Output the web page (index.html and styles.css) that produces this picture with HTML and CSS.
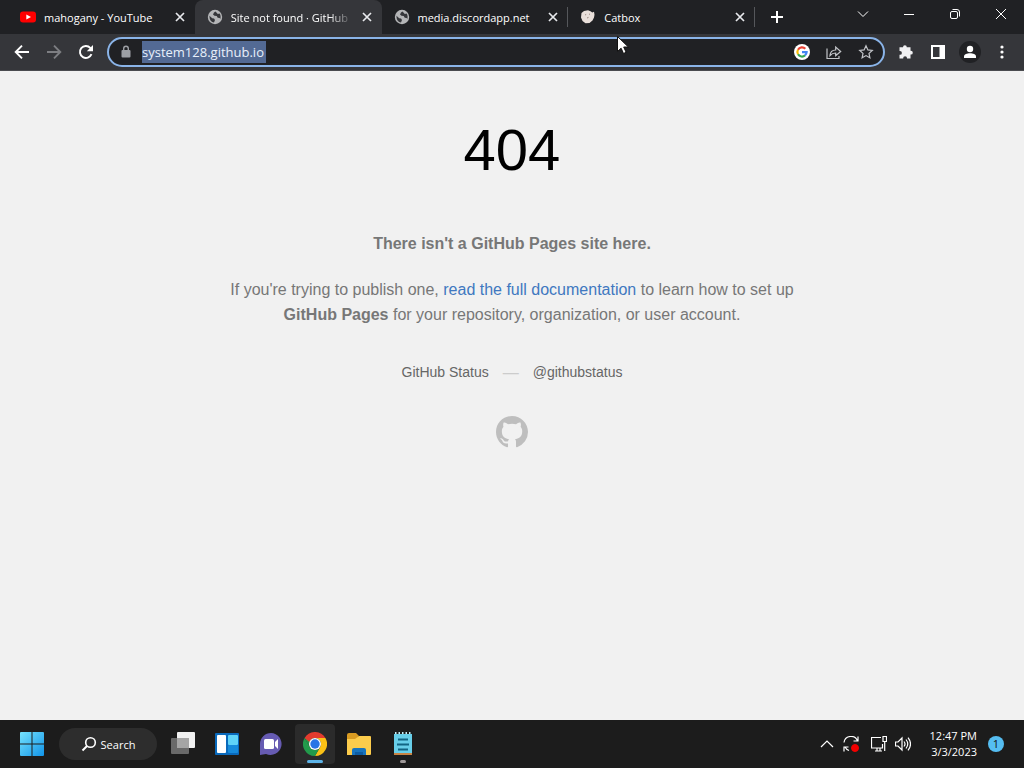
FILE: index.html
```html
<!DOCTYPE html>
<html lang="en">
<head>
<meta charset="utf-8">
<title>Site not found · GitHub Pages</title>
<link rel="stylesheet" href="styles.css">
</head>
<body>
<svg class="sprite" aria-hidden="true">
  <symbol id="globe" viewBox="0 0 16 16"><circle cx="8" cy="8" r="7.200" fill="#b4b5b7"/><path d="M2.500 6.800 5.200 9.200 7 9.600 8 11l-1 2.600C4.300 13.200 2.500 11 2.500 8zM8.500 2.500 7 3.500 6 5.500l1.500 1.300 2.200.2 1 1.700 2 .3.500 1.300c.8-2.400.4-4.500-.7-5.800l-1.700.4z" fill="#35363a"/></symbol>
  <symbol id="close" viewBox="0 0 16 16"><path d="M4 4l8 8M12 4l-8 8" stroke="#e8eaed" stroke-width="1.700"/></symbol>
</svg>
<header>
  <div class="tabstrip">
    <nav class="tabs" aria-label="Tabs">
      <div class="tab"><svg class="icon" viewBox="0 0 16 16"><rect y="2.500" width="16" height="11" rx="3" fill="#f00"/><path d="M6.300 5.500v5L11 8z" fill="#fff"/></svg><span class="title">mahogany - YouTube</span><button aria-label="Close tab"><svg class="icon"><use href="#close"/></svg></button></div>
      <div class="tab active"><svg class="icon"><use href="#globe"/></svg><span class="title">Site not found · GitHub</span><button aria-label="Close tab"><svg class="icon"><use href="#close"/></svg></button></div>
      <div class="tab divided"><svg class="icon"><use href="#globe"/></svg><span class="title">media.discordapp.net</span><button aria-label="Close tab"><svg class="icon"><use href="#close"/></svg></button></div>
      <div class="tab divided"><svg class="icon" viewBox="0 0 16 16"><path d="M1.500 4 4 2l4-.8 2.500 1 1.800 1.300 1.700-.8.500 3-.5 2.800-1.500 3-3 2.400-4 .4L2.500 12 1 8.500z" fill="#e9dfda"/><path d="M5 6l1.200-.6M9 5.500l1-.6M7 9l1.500-.6" stroke="#9a8a84"/></svg><span class="title">Catbox</span><button aria-label="Close tab"><svg class="icon"><use href="#close"/></svg></button></div>
    </nav>
    <button class="newtab" aria-label="New tab"><svg class="icon" viewBox="0 0 16 16"><path d="M8 2v12M2 8h12" stroke="#fff" stroke-width="2"/></svg></button>
    <div class="window-controls">
      <button aria-label="Search tabs"><svg class="icon" viewBox="0 0 16 16"><path d="M3 5.500l5 5 5-5"/></svg></button>
      <button aria-label="Minimize"><svg class="icon" viewBox="0 0 16 16"><path d="M3 8.500h10"/></svg></button>
      <button aria-label="Restore"><svg class="icon" viewBox="0 0 16 16"><rect x="3.500" y="5.500" width="7" height="7" rx="1.500"/><path d="M5.500 3.500H10a2.500 2.500 0 0 1 2.500 2.500v4.500"/></svg></button>
      <button aria-label="Close"><svg class="icon" viewBox="0 0 16 16"><path d="M3 3l10 10M13 3L3 13"/></svg></button>
    </div>
  </div>
  <div class="toolbar">
    <button class="tool" aria-label="Back"><svg class="icon" viewBox="0 0 16 16"><path d="M15 8H2M8 1.700 1.700 8 8 14.300" fill="none" stroke="#fff" stroke-width="1.900"/></svg></button>
    <button class="tool" aria-label="Forward"><svg class="icon" viewBox="0 0 16 16"><path d="M1 8h13M8 1.700 14.300 8 8 14.300" fill="none" stroke="#7d7e82" stroke-width="1.900"/></svg></button>
    <button class="tool" aria-label="Reload"><svg class="icon" viewBox="0 0 16 16"><path d="M13.500 10.200A6 6 0 1 1 12.300 3.800L13.500 5" fill="none" stroke="#fff" stroke-width="1.900"/><path d="M15 1v6.200H8.800z" fill="#fff"/></svg></button>
    <div class="omnibox">
      <button class="tool" aria-label="View site information"><svg class="icon" viewBox="0 0 16 16"><rect x="3.500" y="6" width="9" height="7.500" rx="1" fill="#9da0a5"/><path d="M5.700 6V4.500a2.300 2.300 0 0 1 4.600 0V6" fill="none" stroke="#9da0a5" stroke-width="1.400"/></svg></button>
      <input class="url" type="text" aria-label="Address" value="system128.github.io" spellcheck="false">
      <span class="spacer"></span>
      <button class="tool" aria-label="Search with Google"><svg class="icon" viewBox="0 0 16 16"><circle cx="8" cy="8" r="8" fill="#fff"/><g fill="none" stroke-width="2.200"><path d="M4 5.700A4.600 4.600 0 0 1 11.300 4.800" stroke="#ea4335"/><path d="M4 5.700a4.600 4.600 0 0 0 0 4.600" stroke="#fbbc05"/><path d="M4 10.300a4.600 4.600 0 0 0 7 1.100" stroke="#34a853"/><path d="M11 11.400A4.600 4.600 0 0 0 12.600 8.200H8" stroke="#4285f4"/></g></svg></button>
      <button class="tool" aria-label="Share"><svg class="icon line" viewBox="0 0 16 16"><path d="M1 4.500v10h12V12M4 11.500C4.300 7.500 6.500 6 9.700 6V3l5 4.500-5 4.300V9C7 9 5.500 9.800 4 11.500z"/></svg></button>
      <button class="tool" aria-label="Bookmark"><svg class="icon line" viewBox="0 0 16 16"><path d="M8 1.800l1.900 4.100 4.400.5-3.300 3 .9 4.400L8 11.600l-3.900 2.200.9-4.400-3.300-3 4.400-.5z"/></svg></button>
    </div>
    <button class="tool" aria-label="Extensions"><svg class="icon" viewBox="0 0 16 16"><path d="M5 3.200a1.900 1.900 0 0 1 3.800 0H12.500v3.600h.4a1.900 1.900 0 0 1 0 3.800h-.4V14.500H9v-.4a1.900 1.900 0 0 0-3.800 0v.4H1.500v-3.700H2A1.900 1.900 0 0 0 2 7h-.5V3.200z" fill="#f1f1f3"/></svg></button>
    <button class="tool" aria-label="Side panel"><svg class="icon" viewBox="0 0 16 16"><path d="M1 1h14v14H1zM3 3v10h6.500V3z" fill="#fff" fill-rule="evenodd"/></svg></button>
    <button class="tool" aria-label="Profile"><svg class="avatar" viewBox="0 0 22 22"><circle cx="11" cy="11" r="11" fill="#202124"/><circle cx="11" cy="8" r="3.200" fill="#fff"/><path d="M5 17v-1.500c0-2.200 3-3.300 6-3.300s6 1.100 6 3.300V17z" fill="#fff"/></svg></button>
    <button class="tool" aria-label="Menu"><svg class="icon" viewBox="0 0 16 16" fill="#fff"><circle cx="8" cy="3" r="1.600"/><circle cx="8" cy="8" r="1.600"/><circle cx="8" cy="13" r="1.600"/></svg></button>
  </div>
</header>
<main>
  <h1>404</h1>
  <p><strong>There isn't a GitHub Pages site here.</strong></p>
  <p>If you're trying to publish one, <a href="#">read the full documentation</a> to learn how to set up <strong>GitHub Pages</strong> for your repository, organization, or user account.</p>
  <div class="suggestions"><a href="#">GitHub Status</a><span class="dash">—</span><a href="#">@githubstatus</a></div>
  <a class="logo" href="#" aria-label="GitHub"><svg viewBox="0 0 16 16"><path fill="#bebebe" d="M8 0C3.580 0 0 3.580 0 8c0 3.540 2.290 6.530 5.470 7.590.4.070.55-.17.55-.38 0-.19-.01-.82-.01-1.490-2.010.37-2.530-.49-2.690-.94-.09-.23-.48-.94-.82-1.130-.28-.15-.68-.52-.01-.53.63-.01 1.080.58 1.230.82.72 1.210 1.870.87 2.330.66.070-.52.28-.87.510-1.070-1.780-.2-3.640-.89-3.640-3.950 0-.87.310-1.590.820-2.150-.08-.2-.36-1.020.080-2.120 0 0 .67-.21 2.200.82.64-.18 1.320-.27 2-.27s1.360.09 2 .27c1.530-1.040 2.200-.82 2.200-.82.44 1.100.16 1.920.08 2.120.510.560.820 1.270.820 2.150 0 3.070-1.870 3.750-3.650 3.950.29.25.54.730.540 1.480 0 1.070-.01 1.930-.01 2.200 0 .21.150.460.550.38A8.010 8.010 0 0 0 16 8c0-4.420-3.580-8-8-8z"/></svg></a>
</main>
<footer class="taskbar">
  <button class="app" aria-label="Start"><svg viewBox="0 0 24 24"><defs><linearGradient id="win" x2="1" y2="1"><stop stop-color="#75e2fb"/><stop offset="1" stop-color="#1194e9"/></linearGradient></defs><path d="M1 0h10.500v11.500H0V1a1 1 0 0 1 1-1zM12.500 0H23a1 1 0 0 1 1 1v10.500H12.500zM0 12.500h11.500V24H1a1 1 0 0 1-1-1zM12.500 12.500H24V23a1 1 0 0 1-1 1H12.500z" fill="url(#win)"/></svg></button>
  <button class="search"><svg class="icon" viewBox="0 0 16 16"><circle cx="9.500" cy="6.500" r="4.800" fill="none" stroke="#fff" stroke-width="1.600"/><path d="M6 10l-4.500 4.500" stroke="#fff" stroke-width="2"/></svg>Search</button>
  <button class="app" aria-label="Task view"><svg viewBox="0 0 24 24"><rect x="6" width="18" height="16" rx="1" fill="#f1f1f1"/><rect y="6" width="18" height="16" rx="1" fill="#696969"/><path d="M6 6h12v10H6z" fill="#a5a5a5"/></svg></button>
  <button class="app" aria-label="Widgets"><svg viewBox="0 0 24 24"><rect y="1" width="24" height="22" rx="1" fill="#0969bb"/><rect x="2" y="3" width="9" height="18" rx="1" fill="#fff"/><rect x="13" y="3" width="10" height="10" rx="1" fill="#5fd3f8"/><rect x="13" y="13" width="10" height="8" rx="1" fill="#168bdc"/></svg></button>
  <button class="app" aria-label="Chat"><svg viewBox="0 0 24 24"><path d="M12 1A11 11 0 1 1 7 22L1 23V12A11 11 0 0 1 12 1z" fill="#665bb2"/><rect x="5" y="7" width="10" height="10" rx="1.500" fill="#fff"/><path d="M16 10l3-3v10l-3-3z" fill="#fff"/></svg></button>
  <button class="app current" aria-label="Chrome"><svg viewBox="0 0 24 24"><path d="M22.400 6A12 12 0 0 1 12 24l5.200-9A6 6 0 0 0 17.200 9 6 6 0 0 0 12 6z" fill="#fbc116"/><path d="M12 24A12 12 0 0 1 1.600 6l5.200 9A6 6 0 0 0 17.200 15z" fill="#229a4b"/><path d="M1.600 6l5.200 9A6 6 0 0 1 12 6z" fill="#229a4b"/><path d="M1.600 6A12 12 0 0 1 22.400 6H12a6 6 0 0 0-5.600 4z" fill="#e33b2e"/><circle cx="12" cy="12" r="6" fill="#fff"/><circle cx="12" cy="12" r="4.700" fill="#2974e6"/></svg></button>
  <button class="app" aria-label="File Explorer"><svg viewBox="0 0 24 24"><path d="M0 3a2 2 0 0 1 2-2h7l3 3-3 4H0z" fill="#d99b22"/><path d="M0 7h8l4-3h11a1 1 0 0 1 1 1v17a1 1 0 0 1-1 1H0z" fill="#fccc4c"/><path d="M5 23v-5a2 2 0 0 1 2-2h10a2 2 0 0 1 2 2v5z" fill="#1874bd"/><path d="M8 20h8v3H8z" fill="#0e5ca1"/></svg></button>
  <button class="app open" aria-label="Notepad"><svg viewBox="0 0 24 24"><path d="M3 2h18v19H3z" fill="#67cee9"/><path d="M3 21h18v2H3z" fill="#c98342"/><path d="M4 1h16" stroke="#c7edf5" stroke-width="2" stroke-dasharray="1.500 2"/><path d="M7 7.500h10M6 12.500h12M7 17.500h10" stroke="#126483" stroke-width="2"/></svg></button>
  <span class="spacer"></span>
  <div class="tray">
    <button aria-label="Show hidden icons"><svg class="icon" viewBox="0 0 16 16"><path d="M2 11l6-6 6 6"/></svg></button>
    <button aria-label="Update status"><svg class="icon" viewBox="0 0 16 16"><path d="M1 6.500A7 7 0 0 1 14.500 5M15 .5V5h-4.500M6 14.500A7 7 0 0 1 2 11M1 15.500V11h4.500"/><circle cx="12" cy="12" r="3.500" fill="#f20000" stroke="#f20000"/></svg></button>
    <button class="wide" aria-label="Network"><svg class="icon" viewBox="0 0 16 16"><path d="M10 1.500H.5v10.500H11.500V8M4 15h7M6 12v3M9 12v3M12 .5h3.500v5H12zM13.700 5.500V15"/></svg></button>
    <button class="volume" aria-label="Volume"><svg class="icon" viewBox="0 0 16 16"><path d="M.5 6h2.500l4-4v12l-4-4H.5zM9 5.500q2 2.500 0 5M11 3.500q3.500 4.500 0 9M13 1.700q5 6.300 0 12.600"/></svg></button>
    <div class="clock"><time>12:47 PM</time><time>3/3/2023</time></div>
    <span class="badge">1</span>
  </div>
</footer>
<svg class="cursor" viewBox="0 0 12 18" aria-hidden="true"><path d="M.5.5v15l3.600-3.300L6.500 17.500l2.600-1.200L6.700 11h4.700z" fill="#fff" stroke="#111"/></svg>
</body>
</html>
```
FILE: styles.css
```css
* { box-sizing: border-box; }
body {
  margin: 0;
  min-height: 100vh;
  display: flex;
  flex-direction: column;
  background: #f1f1f1;
  font-family: "Open Sans", "Noto Sans", sans-serif;
  font-size: 11px;
  color: #fff;
}
button {
  display: flex;
  align-items: center;
  justify-content: center;
  padding: 0;
  border: 0;
  background: none;
  color: inherit;
  font: inherit;
}
svg { display: block; flex: none; }
.sprite { position: absolute; width: 0; height: 0; }
.icon { width: 16px; height: 16px; }
.spacer { flex: 1; }

.tabstrip { display: flex; height: 34px; padding-left: 8px; background: #202124; }
.tabs { display: flex; flex: 0 1 747px; min-width: 0; }
.tab {
  flex: 1;
  min-width: 0;
  display: flex;
  align-items: center;
  gap: 6px;
  padding: 0 7px 0 12px;
}
.tab.active { background: #35363a; border-radius: 8px 8px 0 0; }
.tab.active .title { mask-image: linear-gradient(to left, transparent, #000 24px); }
.tab.divided {
  background: linear-gradient(#55575b, #55575b) right center / 1px 20px no-repeat;
}
.title {
  flex: 1;
  padding-left: 2px;
  overflow: hidden;
  white-space: nowrap;
}
.newtab { width: 28px; margin-left: 8px; }
.window-controls { display: flex; height: 28px; margin-left: auto; }
.window-controls button { width: 46px; }
.window-controls path, .window-controls rect { fill: none; stroke: #fff; }

.toolbar {
  display: flex;
  align-items: center;
  height: 37px;
  padding: 0 6px;
  background: #35363a;
  border-bottom: 1px solid #4a4b4f;
}
.tool { width: 32px; height: 28px; flex: none; }
.avatar { width: 22px; height: 22px; }
.line { fill: none; stroke: #c3c5c9; stroke-width: 1.2; }
.omnibox {
  flex: 1;
  min-width: 0;
  display: flex;
  align-items: center;
  height: 30px;
  margin: 0 5px;
  padding: 0 1px;
  border: 2px solid #8ab4e8;
  border-radius: 15px;
  background: #202124;
}
.url {
  width: 124px;
  height: 22px;
  padding: 0;
  border: 0;
  outline: 0;
  background: #536a94;
  color: #e8f0fb;
  font: 13px "Open Sans", "Noto Sans", sans-serif;
}

main {
  flex: 1;
  width: 100%;
  max-width: 600px;
  margin: 0 auto;
  padding: 49px 16px;
  text-align: center;
  color: #777;
  font: 16px/25px "Liberation Sans", Arial, sans-serif;
}
h1 { margin: 0 0 51px; font-size: 58px; font-weight: 400; line-height: 60px; color: #000; }
p { margin: 0 0 21px; }
a { color: #4078c0; text-decoration: none; }
.suggestions {
  display: flex;
  justify-content: center;
  gap: 14px;
  margin-top: 33px;
  font-size: 14px;
  color: #ccc;
}
.suggestions a { color: #666; }
.dash { font-size: 16px; }
.logo { display: inline-block; margin-top: 31px; }
.logo svg { width: 32px; height: 32px; }

.taskbar {
  display: flex;
  align-items: center;
  height: 48px;
  padding: 0 20px 0 10px;
  background: #1c1c1c;
}
.app { position: relative; width: 44px; height: 40px; }
.app svg { width: 24px; height: 24px; }
.current { width: 40px; margin: 0 2px; border-radius: 4px; background: #2b2b2b; }
.current::after, .open::after {
  content: "";
  position: absolute;
  bottom: 1px;
  width: 16px;
  height: 3px;
  border-radius: 2px;
  background: #5db4e8;
}
.open::after { width: 6px; background: #a09a9a; }
.search {
  gap: 4px;
  width: 98px;
  height: 32px;
  margin: 0 4px 0 5px;
  border-radius: 16px;
  background: #2d2d2d;
}
.tray { display: flex; align-items: center; }
.tray button { width: 24px; height: 32px; }
.tray .wide { width: 32px; }
.tray .volume { width: 16px; }
.tray path { fill: none; stroke: #fff; stroke-width: 1.2; }
.clock {
  display: flex;
  flex-direction: column;
  min-width: 66px;
  margin-right: 11px;
  line-height: 16px;
  text-align: right;
}
.badge {
  width: 16px;
  height: 16px;
  border-radius: 50%;
  background: #55bdf1;
  color: #111;
  line-height: 16px;
  text-align: center;
}
.cursor { position: absolute; left: 617px; top: 36px; width: 12px; height: 18px; }
```
